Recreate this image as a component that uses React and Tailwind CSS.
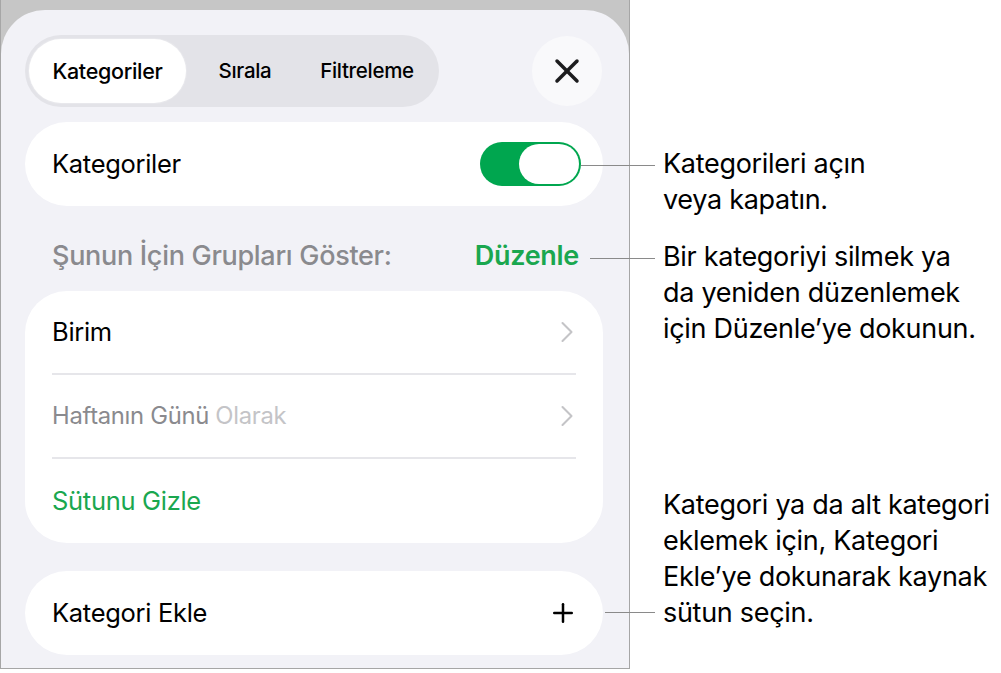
import React from 'react';
import { X, ChevronRight, Plus } from 'lucide-react';

const font = { fontFamily: 'Inter, "Noto Sans", sans-serif' };

// leader line running from a control out to its note
function Leader({ className }) {
  return <div className={`absolute h-px bg-[#8a8a8a] ${className}`} />;
}

function Note({ lines, className }) {
  return (
    <div className={`absolute left-[663px] text-[27px] leading-[36px] tracking-[-0.3px] text-black ${className}`}>
      {lines.map((l) => (
        <div key={l}>{l}</div>
      ))}
    </div>
  );
}

function Row({ children, divider }) {
  return (
    <div className="px-[27px]">
      <div className={`flex h-[84px] items-center justify-between ${divider ? 'border-b-2 border-[#e6e6ea]' : ''}`}>
        {children}
      </div>
    </div>
  );
}

export default function App() {
  return (
    <div className="relative h-[673px] w-[1001px] overflow-hidden bg-white" style={font}>
      {/* phone sheet */}
      <div className="absolute left-0 top-0 h-[669px] w-[630px] border-b border-l border-r border-[#a6a6a6] bg-[#c6c6c6]">
        <div className="mt-[10px] flex h-[658px] flex-col rounded-t-[44px] bg-[#f2f2f7] px-[24px] pt-[25px]">
          {/* tabs + close */}
          <div className="flex items-center justify-between">
            <div className="flex h-[72px] w-[414px] items-center rounded-full bg-[#e3e3e8] p-[4px]">
              <div className="flex h-[64px] w-[157px] items-center justify-center rounded-full bg-white text-[21.5px] font-medium tracking-[-0.3px] text-black shadow-[0_0_0_1px_#e8e8ec]">
                Kategoriler
              </div>
              <div className="flex w-[118px] justify-center text-[20.5px] font-medium tracking-[-0.3px] text-black">Sırala</div>
              <div className="flex w-[126px] justify-center text-[20.5px] font-medium tracking-[-0.3px] text-black">Filtreleme</div>
            </div>
            <div className="mr-[3px] flex h-[70px] w-[70px] items-center justify-center rounded-full bg-[#f9f9fb]">
              <X size={40} strokeWidth={2.1} color="#1c1c1e" />
            </div>
          </div>

          {/* categories toggle */}
          <div className="mt-[15px] mr-[2px] flex h-[84px] items-center justify-between rounded-[42px] bg-white pl-[27px] pr-[22px]">
            <span className="text-[25.5px] tracking-[-0.3px] text-black">Kategoriler</span>
            <div className="flex h-[44px] w-[101px] items-center justify-end rounded-full bg-[#00a64f] p-[2px]">
              <div className="h-[40px] w-[60px] rounded-full bg-white" />
            </div>
          </div>

          {/* group header */}
          <div className="mt-[34px] flex h-[32px] items-center justify-between pl-[27px] pr-[26px] leading-[32px]">
            <span className="text-[27px] font-medium tracking-[-0.3px] text-[#8a8a8e]">Şunun İçin Grupları Göster:</span>
            <span className="text-[27px] font-semibold tracking-[-0.3px] text-[#1aa74f]">Düzenle</span>
          </div>

          {/* group list */}
          <div className="mt-[19px] mr-[2px] rounded-[42px] bg-white">
            <Row divider>
              <span className="text-[25.5px] tracking-[-0.3px] text-black">Birim</span>
              <ChevronRight size={36} strokeWidth={1.4} color="#c4c4c7" className="-mr-[9px]" />
            </Row>
            <Row divider>
              <span className="text-[23.8px] tracking-[-0.3px] text-[#8a8a8e]">
                Haftanın Günü <span className="text-[#c4c4c7]">Olarak</span>
              </span>
              <ChevronRight size={36} strokeWidth={1.4} color="#c4c4c7" className="-mr-[9px]" />
            </Row>
            <Row>
              <span className="text-[25.5px] tracking-[-0.3px] text-[#1aa74f]">Sütunu Gizle</span>
            </Row>
          </div>

          {/* add category */}
          <div className="mt-[28px] mr-[2px] flex h-[84px] items-center justify-between rounded-[42px] bg-white pl-[27px] pr-[25px]">
            <span className="text-[25.5px] tracking-[-0.3px] text-black">Kategori Ekle</span>
            <Plus size={30} strokeWidth={2} color="#000" />
          </div>
        </div>
      </div>

      {/* notes */}
      <Leader className="left-[581px] top-[165px] w-[74px]" />
      <Note className="top-[146px]" lines={['Kategorileri açın', 'veya kapatın.']} />

      <Leader className="left-[590px] top-[258px] w-[65px]" />
      <Note className="top-[239px]" lines={['Bir kategoriyi silmek ya', 'da yeniden düzenlemek', 'için Düzenle’ye dokunun.']} />

      <Leader className="left-[605px] top-[612px] w-[50px]" />
      <Note
        className="top-[487px]"
        lines={['Kategori ya da alt kategori', 'eklemek için, Kategori', 'Ekle’ye dokunarak kaynak', 'sütun seçin.']}
      />
    </div>
  );
}
